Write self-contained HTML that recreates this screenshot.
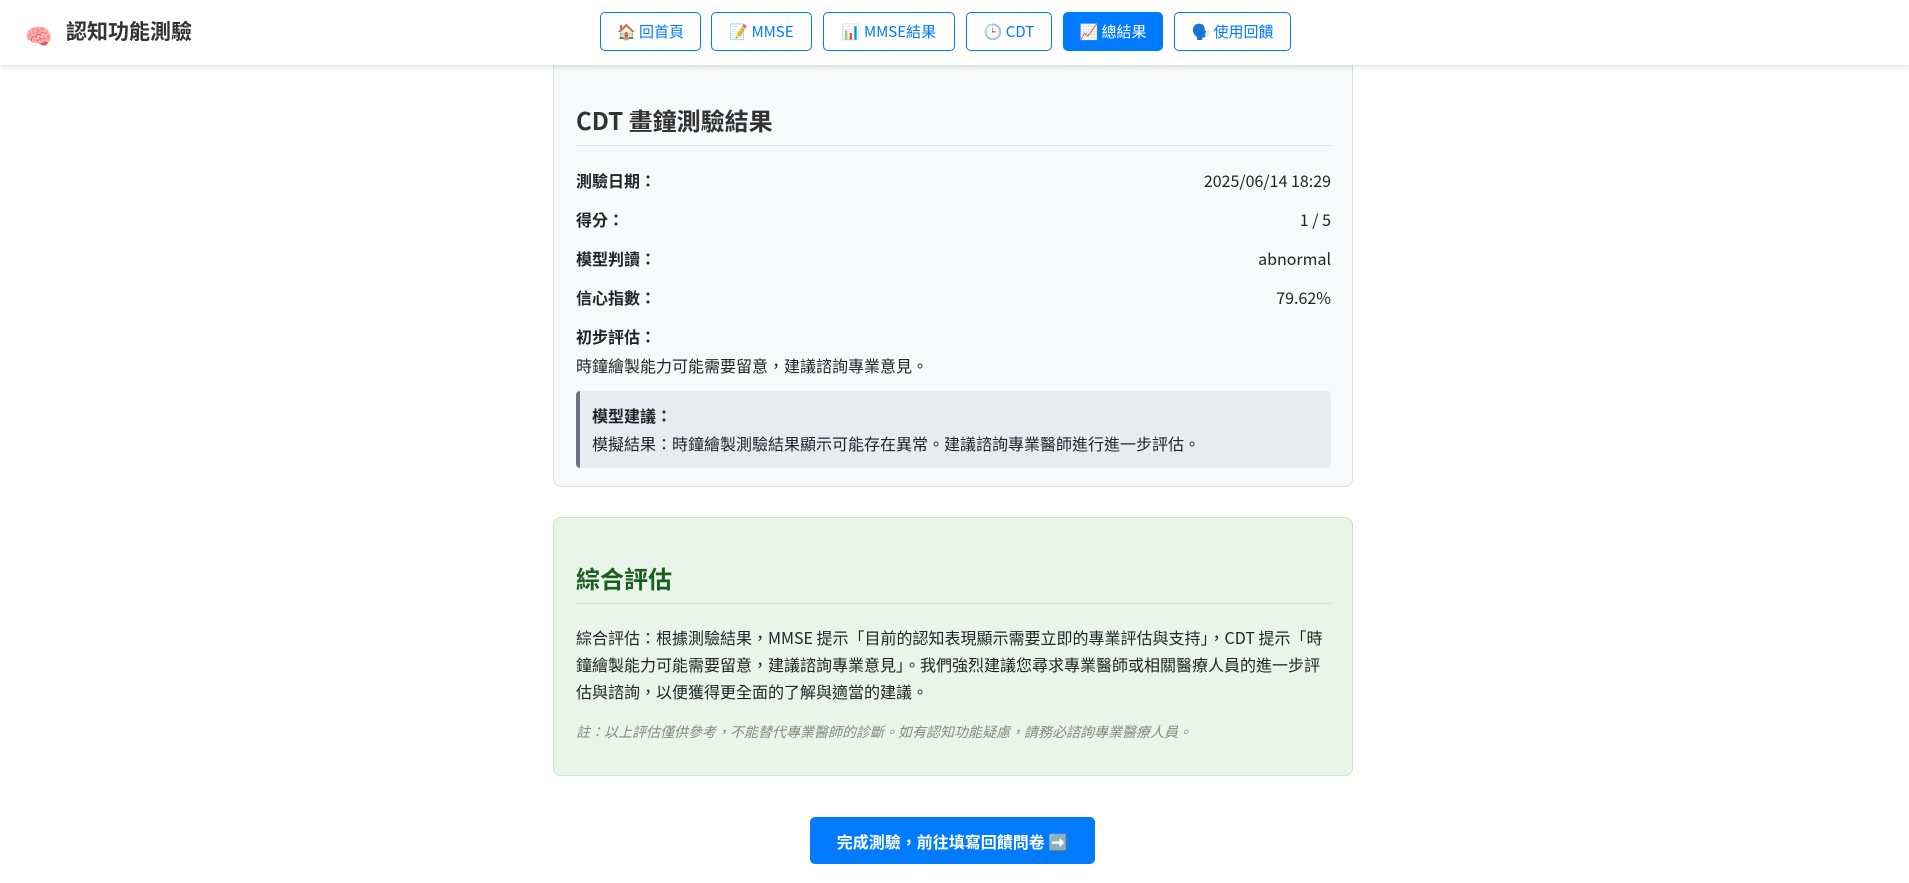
<!DOCTYPE html>
<html><head><meta charset="utf-8"><style>
*{box-sizing:border-box;margin:0;padding:0}
body{width:1909px;height:883px;overflow:hidden;background:#fff;font-family:"Noto Sans CJK TC","Liberation Sans",sans-serif;color:#212529;position:relative}
.hdr{position:absolute;left:0;top:0;width:1909px;height:65px;background:#fff;box-shadow:0 2px 5px rgba(0,0,0,.12);z-index:5}
.logo{position:absolute;left:25px;top:19px;font-size:22px}
.ttl{position:absolute;left:66px;top:16px;font-size:21px;font-weight:bold;color:#333}
.btn{position:absolute;top:12px;height:39px;border:1px solid #007bff;border-radius:5px;color:#007bff;font-size:15px;display:flex;align-items:center;justify-content:center;gap:6px;background:#fff}
.btn.on{background:#007bff;color:#fff}
.card{position:absolute;left:553px;width:800px;border-radius:8px}
.c1{top:-10px;height:497px;background:#f8f9fa;border:1px solid #dee2e6}
.c2{top:517px;height:259px;background:#e8f5e9;border:1px solid #c8e6c9}
.a{position:absolute;left:22px;right:21px}
h3{font-size:24px;font-weight:bold;color:#333}
.row{font-size:16px;display:flex;justify-content:space-between;align-items:baseline}
.row b{font-weight:bold}
</style></head><body>
<div class="hdr">
<div class="logo">🧠</div>
<div class="ttl">認知功能測驗</div>
<div class="btn" style="left:600px;width:101px">🏠 回首頁</div>
<div class="btn" style="left:711px;width:101px">📝 MMSE</div>
<div class="btn" style="left:823px;width:132px">📊 MMSE結果</div>
<div class="btn" style="left:966px;width:86px">🕒 CDT</div>
<div class="btn on" style="left:1063px;width:100px">📈 總結果</div>
<div class="btn" style="left:1174px;width:117px">🗣️ 使用回饋</div>
</div>
<div class="card c1">
<h3 class="a" style="top:111px">CDT 畫鐘測驗結果</h3>
<div class="a" style="top:154px;border-top:1px solid #dee2e6"></div>
<div class="a row" style="top:177px"><b>測驗日期：</b><span>2025/06/14 18:29</span></div>
<div class="a row" style="top:216px"><b>得分：</b><span>1 / 5</span></div>
<div class="a row" style="top:255px"><b>模型判讀：</b><span>abnormal</span></div>
<div class="a row" style="top:294px"><b>信心指數：</b><span>79.62%</span></div>
<div class="a row" style="top:333px"><b>初步評估：</b></div>
<div class="a" style="top:362px;font-size:16px">時鐘繪製能力可能需要留意，建議諮詢專業意見。</div>
<div class="a" style="top:400px;height:77px;background:#e9ecef;border-left:4px solid #6c757d;border-radius:4px;padding:12px 0 0 12px;font-size:16px">
<b>模型建議：</b><div style="margin-top:4px">模擬結果：時鐘繪製測驗結果顯示可能存在異常。建議諮詢專業醫師進行進一步評估。</div></div>
</div>
<div class="card c2">
<h3 class="a" style="top:42px;color:#1b5e20">綜合評估</h3>
<div class="a" style="top:85px;border-top:1px solid #c8e6c9"></div>
<div class="a" style="top:106px;font-size:16px;line-height:27px">綜合評估：根據測驗結果，MMSE 提示「目前的認知表現顯示需要立即的專業評估與支持」，CDT 提示「時鐘繪製能力可能需要留意，建議諮詢專業意見」。我們強烈建議您尋求專業醫師或相關醫療人員的進一步評估與諮詢，以便獲得更全面的了解與適當的建議。</div>
<div class="a" style="top:204px;font-size:14px;font-style:italic;color:#888">註：以上評估僅供參考，不能替代專業醫師的診斷。如有認知功能疑慮，請務必諮詢專業醫療人員。</div>
</div>
<div style="position:absolute;left:810px;top:817px;width:285px;height:47px;background:#007bff;border-radius:5px;color:#fff;font-size:16px;font-weight:bold;display:flex;align-items:center;justify-content:center">完成測驗，前往填寫回饋問卷 ➡️</div>
</body></html>
